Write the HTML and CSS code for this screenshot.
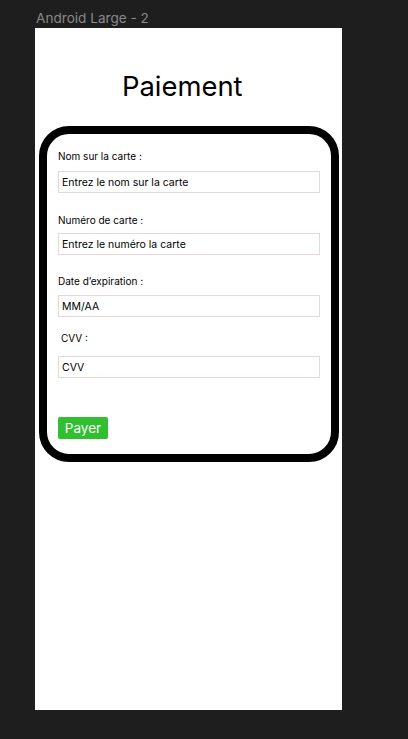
FILE: index.html
```html
<!DOCTYPE html>
<html lang="fr">
<head>
<meta charset="utf-8">
<title>Paiement</title>
<link rel="stylesheet" href="styles.css">
</head>
<body>
  <div class="frame-label">Android Large - 2</div>
  <main class="frame">
    <h1 class="title">Paiement</h1>
    <form class="card">
      <label class="field-label">Nom sur la carte :</label>
      <input class="field gap-s" type="text" placeholder="Entrez le nom sur la carte">
      <label class="field-label gap-l">Numéro de carte :</label>
      <input class="field gap-xs" type="text" placeholder="Entrez le numéro la carte">
      <label class="field-label gap-l2">Date d’expiration :</label>
      <input class="field gap-s2" type="text" placeholder="MM/AA">
      <label class="field-label indent gap-m">CVV :</label>
      <input class="field gap-m2" type="text" placeholder="CVV">
      <div class="actions">
        <button type="button" class="pay">Payer</button>
      </div>
    </form>
  </main>
</body>
</html>
```
FILE: styles.css
```css
* { box-sizing: border-box; }

html, body {
  margin: 0;
  padding: 0;
  background: #1e1e1e;
  font-family: Inter, "Noto Sans", sans-serif;
}

body {
  width: 408px;
  height: 739px;
  overflow: hidden;
}

.frame-label {
  height: 28px;
  padding: 10px 0 0 36px;
  font-size: 13.6px;
  line-height: 16px;
  color: #898989;
}

.frame {
  margin-left: 35px;
  width: 307px;
  height: 682px;
  background: #ffffff;
  padding-top: 41px;
  display: flex;
  flex-direction: column;
}

.title {
  margin: 0;
  padding-left: 87px;
  font-size: 27.4px;
  line-height: 34px;
  font-weight: 400;
  color: #000;
}

.card {
  margin: 23px 0 0 4px;
  width: 300px;
  border: 8px solid #000;
  border-radius: 30px;
  padding: 16px 11px 15px 11px;
  display: flex;
  flex-direction: column;
}

.field-label {
  font-size: 10px;
  line-height: 12px;
  color: #000;
  height: 12px;
}

.indent { padding-left: 3px; }

.field {
  display: block;
  width: 262px;
  height: 22px;
  margin: 0;
  border: 1px solid #e7d7d9;
  border-radius: 0;
  padding: 0 3px;
  font-family: Inter, "Noto Sans", sans-serif;
  font-size: 10.5px;
  color: #000;
  background: #fff;
  outline: none;
}

.field::placeholder { color: #000; opacity: 1; }

.gap-s { margin-top: 9px; }
.gap-xs { margin-top: 7px; }
.gap-s2 { margin-top: 8px; }
.gap-l { margin-top: 21px; }
.gap-l2 { margin-top: 20px; }
.gap-m { margin-top: 15px; }
.gap-m2 { margin-top: 12px; }

.actions {
  margin-top: 39px;
  display: flex;
}

.pay {
  height: 22px;
  width: 50px;
  padding: 0;
  border: none;
  border-radius: 2px;
  background: #2fbf30;
  color: #fff;
  font-family: Inter, "Noto Sans", sans-serif;
  font-size: 13.5px;
  line-height: 22px;
  cursor: pointer;
}
```
